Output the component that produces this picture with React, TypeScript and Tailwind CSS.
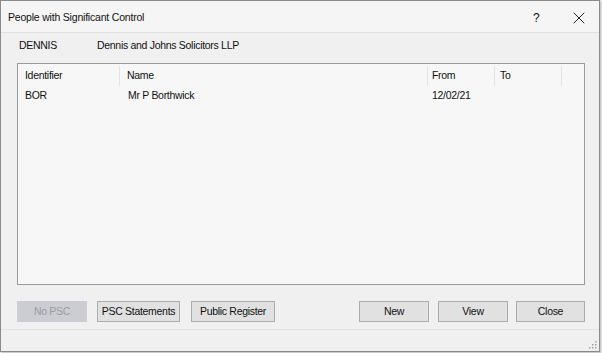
import { X } from "lucide-react";

const columns = [
  { label: "Identifier", w: "w-[102px]", pl: "pl-[7px]" },
  { label: "Name", w: "w-[308px]", pl: "pl-[7px]" },
  { label: "From", w: "w-[67px]", pl: "pl-[4px]" },
  { label: "To", w: "w-[67px]", pl: "pl-[5px]" },
];

const rows = [{ id: "BOR", name: "Mr P Borthwick", from: "12/02/21", to: "" }];

function Btn({ label, w, disabled }: { label: string; w: string; disabled?: boolean }) {
  return (
    <button
      disabled={disabled}
      className={`${w} h-[21px] border whitespace-nowrap text-[10.5px] tracking-[-0.3px] leading-none ${
        disabled
          ? "bg-[#cccdd2] border-[#cccdd2] text-[#9a9ba0]"
          : "bg-[#e1e1e1] border-[#adadad] text-[#111]"
      }`}
    >
      {label}
    </button>
  );
}

export default function App() {
  return (
    <div
      className="w-[602px] h-[353px] bg-[#f4f4f4] text-[#111]"
      style={{ fontFamily: '"Liberation Sans", Arial, sans-serif' }}
    >
      <div className="w-[600px] h-[352px] border border-[#8a8a8a] bg-[#f0f0f0] flex flex-col shadow-[1px_1px_2px_rgba(0,0,0,0.25)]">
        {/* title bar */}
        <div className="h-[32px] pt-[2px] border-b border-[#e2e2e2] bg-[#f5f5f5] flex items-center pl-[7px]">
          <span className="text-[10.5px] tracking-[-0.2px] flex-1">People with Significant Control</span>
          <span className="text-[12px] w-[12px] mr-[24px]">?</span>
          <X className="w-[20px] h-[20px] mr-[10px]" strokeWidth={1.1} />
        </div>

        {/* company */}
        <div className="h-[30px] flex items-center pb-[4px] text-[10.5px] tracking-[-0.3px]">
          <span className="pl-[18px] w-[96px]">DENNIS</span>
          <span>Dennis and Johns Solicitors LLP</span>
        </div>

        {/* list */}
        <div className="ml-[16px] w-[568px] h-[222px] border border-[#9a9a9a] bg-[#f7f7f7] text-[10.5px] tracking-[-0.3px]">
          <div className="flex h-[22px] items-center">
            {columns.map((c) => (
              <div key={c.label} className={`${c.w} ${c.pl} h-[20px] mt-[2px] flex items-center border-r border-[#e3e3e3]`}>
                {c.label}
              </div>
            ))}
          </div>
          {rows.map((r) => (
            <div key={r.id} className="flex h-[20px] items-center">
              <div className="w-[102px] pl-[7px]">{r.id}</div>
              <div className="w-[308px] pl-[8px]">{r.name}</div>
              <div className="w-[67px] pl-[4px]">{r.from}</div>
              <div className="w-[67px] pl-[5px]">{r.to}</div>
            </div>
          ))}
        </div>

        {/* buttons */}
        <div className="flex mt-[16px] pl-[16px] h-[21px]">
          <Btn label="No PSC" w="w-[70px]" disabled />
          <div className="w-[10px]" />
          <Btn label="PSC Statements" w="w-[83px]" />
          <div className="w-[11px]" />
          <Btn label="Public Register" w="w-[84px]" />
          <div className="flex-1" />
          <Btn label="New" w="w-[70px]" />
          <div className="w-[9px]" />
          <Btn label="View" w="w-[70px]" />
          <div className="w-[8px]" />
          <Btn label="Close" w="w-[69px]" />
          <div className="w-[14px]" />
        </div>

        {/* status bar */}
        <div className="mt-[7px] flex-1 border-t border-[#e3e3e3] flex items-end justify-end pr-[2px] pb-[2px]">
          <svg width="10" height="10" viewBox="0 0 10 10">
            {[
              [8, 2],
              [8, 5],
              [5, 5],
              [8, 8],
              [5, 8],
              [2, 8],
            ].map(([x, y]) => (
              <rect key={`${x}-${y}`} x={x} y={y} width="1.5" height="1.5" fill="#a0a0a0" />
            ))}
          </svg>
        </div>
      </div>
    </div>
  );
}
